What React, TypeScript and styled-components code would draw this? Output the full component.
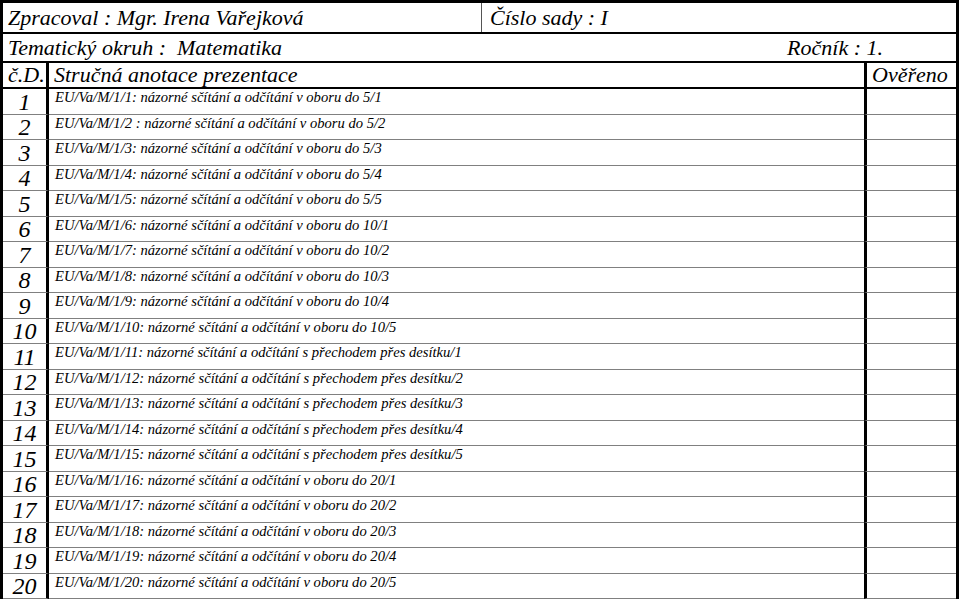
import React from "react";
import styled, { createGlobalStyle } from "styled-components";

const GlobalStyle = createGlobalStyle`
  html, body { margin: 0; padding: 0; background: #ffffff; overflow: hidden; }
  body { font-family: "Liberation Serif", "Times New Roman", "DejaVu Serif", serif; color: #000; }
`;

const Sheet = styled.div`
  box-sizing: border-box;
  width: 959px;
  height: 603px;
  border-top: 3px solid #000;
  border-left: 3px solid #000;
  border-right: 3px solid #000;
  display: flex;
  flex-direction: column;
  font-family: "Liberation Serif", "Times New Roman", serif;
  font-style: italic;
`;

const HeadRow = styled.div<{ $h: number }>`
  display: flex;
  align-items: center;
  height: ${(p) => p.$h}px;
  border-bottom: 2px solid #000;
  font-size: 22px;
  line-height: 1;
`;

const HeadCell = styled.div<{ $w?: number; $divider?: boolean }>`
  box-sizing: border-box;
  height: 100%;
  display: flex;
  align-items: center;
  padding-left: ${(p) => (p.$divider ? 8 : 5)}px;
  ${(p) => (p.$w ? `width: ${p.$w}px; flex: none;` : "flex: 1;")}
  ${(p) => (p.$divider ? "border-left: 1px solid #555;" : "")}
  white-space: nowrap;
`;

const Spread = styled.div`
  flex: 1;
  display: flex;
  justify-content: space-between;
  align-items: center;
  padding: 0 73px 0 5px;
  white-space: nowrap;
`;

const Table = styled.div`
  flex: 1;
  display: grid;
  grid-template-columns: 46px 1fr 92px;
  grid-template-rows: 26px repeat(20, 25.5px) 1fr;
`;

const Cell = styled.div<{ $first?: boolean; $last?: boolean; $thick?: boolean; $empty?: boolean }>`
  box-sizing: border-box;
  border-bottom: ${(p) => (p.$empty ? "0" : p.$thick ? "2px solid #000" : "1px solid #808080")};
  ${(p) => (p.$last ? "border-left: 3px solid #000;" : "")}
  ${(p) => (p.$first ? "border-right: 3px solid #000;" : "")}
  white-space: nowrap;
  overflow: hidden;
`;

const HeadText = styled(Cell)<{ $pad: number }>`
  font-size: 22px;
  line-height: 1;
  display: flex;
  align-items: center;
  padding-left: ${(p) => p.$pad}px;
`;

const Num = styled(Cell)`
  font-size: 24px;
  line-height: 1;
  display: flex;
  align-items: center;
  justify-content: center;
  padding-top: 1px;
`;

const Desc = styled(Cell)`
  font-size: 14.6px;
  line-height: 16px;
  padding-left: 6px;
  padding-top: 0;
`;

const items: string[] = [
  "EU/Va/M/1/1: názorné sčítání a odčítání v oboru do 5/1",
  "EU/Va/M/1/2 : názorné sčítání a odčítání v oboru do 5/2",
  "EU/Va/M/1/3: názorné sčítání a odčítání v oboru do 5/3",
  "EU/Va/M/1/4: názorné sčítání a odčítání v oboru do 5/4",
  "EU/Va/M/1/5: názorné sčítání a odčítání v oboru do 5/5",
  "EU/Va/M/1/6: názorné sčítání a odčítání v oboru do 10/1",
  "EU/Va/M/1/7: názorné sčítání a odčítání v oboru do 10/2",
  "EU/Va/M/1/8: názorné sčítání a odčítání v oboru do 10/3",
  "EU/Va/M/1/9: názorné sčítání a odčítání v oboru do 10/4",
  "EU/Va/M/1/10: názorné sčítání a odčítání v oboru do 10/5",
  "EU/Va/M/1/11: názorné sčítání a odčítání s přechodem přes desítku/1",
  "EU/Va/M/1/12: názorné sčítání a odčítání s přechodem přes desítku/2",
  "EU/Va/M/1/13: názorné sčítání a odčítání s přechodem přes desítku/3",
  "EU/Va/M/1/14: názorné sčítání a odčítání s přechodem přes desítku/4",
  "EU/Va/M/1/15: názorné sčítání a odčítání s přechodem přes desítku/5",
  "EU/Va/M/1/16: názorné sčítání a odčítání v oboru do 20/1",
  "EU/Va/M/1/17: názorné sčítání a odčítání v oboru do 20/2",
  "EU/Va/M/1/18: názorné sčítání a odčítání v oboru do 20/3",
  "EU/Va/M/1/19: názorné sčítání a odčítání v oboru do 20/4",
  "EU/Va/M/1/20: názorné sčítání a odčítání v oboru do 20/5",
];

export default function App() {
  return (
    <>
      <GlobalStyle />
      <Sheet>
        <HeadRow $h={29}>
          <HeadCell $w={478}>Zpracoval : Mgr. Irena Vařejková</HeadCell>
          <HeadCell $divider>Číslo sady : I</HeadCell>
        </HeadRow>
        <HeadRow $h={27}>
          <Spread>
            <span>Tematický okruh :&nbsp; Matematika</span>
            <span>Ročník : 1.</span>
          </Spread>
        </HeadRow>
        <Table>
          <HeadText $first $thick $pad={5}>č.D.</HeadText>
          <HeadText $thick $pad={5}>Stručná anotace prezentace</HeadText>
          <HeadText $last $thick $pad={5}>Ověřeno</HeadText>
          {items.map((t, i) => (
            <React.Fragment key={i}>
              <Num $first>{i + 1}</Num>
              <Desc>{t}</Desc>
              <Cell $last />
            </React.Fragment>
          ))}
          <Cell $first $empty />
          <Cell $empty />
          <Cell $last $empty />
        </Table>
      </Sheet>
    </>
  );
}
